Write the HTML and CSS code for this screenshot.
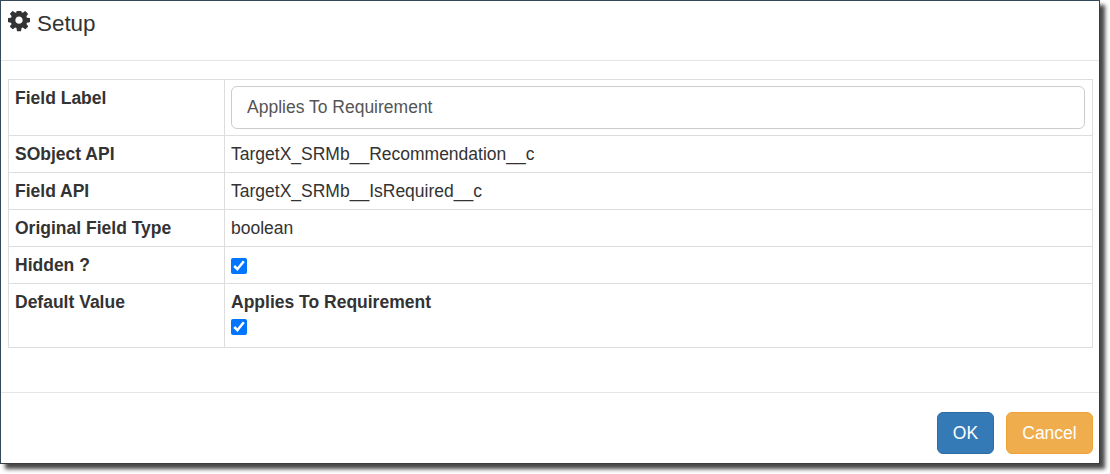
FILE: index.html
```html
<!DOCTYPE html>
<html lang="en">
<head>
<meta charset="utf-8">
<title>Setup</title>
<link rel="stylesheet" href="styles.css">
</head>
<body>
<div class="modal">
  <header class="modal-header">
    <svg class="gear" viewBox="0 0 1536 1536" aria-hidden="true"><path d="M1024 640q0-106-75-181t-181-75-181 75-75 181 75 181 181 75 181-75 75-181zm512-109v222q0 12-8 23t-20 13l-185 28q-19 54-39 91 35 50 107 138 10 12 10 25t-9 23q-27 37-99 108t-94 71q-12 0-26-9l-138-108q-44 23-91 38-16 136-29 186-7 28-36 28h-222q-14 0-24.500-8.500t-11.500-21.500l-28-184q-49-16-90-37l-141 107q-10 9-25 9-14 0-25-11-126-114-165-168-7-10-7-23 0-12 8-23 15-21 51-66.500t54-70.500q-27-50-41-99l-183-27q-13-2-21-12.500t-8-23.500v-222q0-12 8-23t19-13l186-28q14-46 39-92-40-57-107-138-10-12-10-24 0-10 9-23 26-36 98.500-107.500t94.500-71.500q13 0 26 10l138 107q44-23 91-38 16-136 29-186 7-28 36-28h222q14 0 24.500 8.500t11.500 21.500l28 184q49 16 90 37l142-107q9-9 24-9 13 0 25 10 129 119 165 170 7 8 7 22 0 12-8 23-15 21-51 66.500t-54 70.500q26 50 41 98l183 28q13 2 21 12.500t8 23.500z"/></svg>
    <h1 class="modal-title">Setup</h1>
  </header>
  <div class="modal-body">
    <table class="setup-table">
      <tr class="row-input">
        <th>Field Label</th>
        <td><input class="field" type="text" value="Applies To Requirement"></td>
      </tr>
      <tr><th>SObject API</th><td>TargetX_SRMb__Recommendation__c</td></tr>
      <tr><th>Field API</th><td>TargetX_SRMb__IsRequired__c</td></tr>
      <tr><th>Original Field Type</th><td>boolean</td></tr>
      <tr><th>Hidden ?</th><td><input class="check" type="checkbox" checked></td></tr>
      <tr>
        <th>Default Value</th>
        <td>
          <div class="sub-label">Applies To Requirement</div>
          <input class="check" type="checkbox" checked>
        </td>
      </tr>
    </table>
  </div>
  <footer class="modal-footer">
    <button class="btn btn-primary" type="button">OK</button>
    <button class="btn btn-warning" type="button">Cancel</button>
  </footer>
</div>
</body>
</html>
```
FILE: styles.css
```css
* { box-sizing: border-box; }
html, body { margin: 0; padding: 0; background: #fff; }
body {
  width: 1110px;
  height: 474px;
  overflow: hidden;
  font-family: "Liberation Sans", Arial, sans-serif;
  font-size: 17.5px;
  line-height: 20px;
  color: #333;
}
.modal {
  width: 1100px;
  height: 464px;
  background: #fff;
  border: 1px solid #34495a;
  border-bottom-color: #3c3c3c;
  border-right-color: #3c3c3c;
  box-shadow: 5px 5px 4px 0 rgba(40, 40, 40, .85);
  display: flex;
  flex-direction: column;
}
.modal-header {
  height: 60px;
  border-bottom: 1px solid #e5e5e5;
  display: flex;
  align-items: flex-start;
  padding: 8px 7px 0;
  gap: 7px;
}
.gear { width: 22px; height: 22px; fill: #333; flex: none; margin-top: 2px; }
.modal-title {
  margin: 0;
  font-size: 22.4px;
  font-weight: 400;
  line-height: 30px;
  color: #333;
}
.modal-body { height: 331px; padding: 18px 6px 0 7px; }
.setup-table {
  width: 1085px;
  border-collapse: collapse;
  table-layout: fixed;
}
.setup-table th, .setup-table td {
  border: 1px solid #ddd;
  padding: 8px 6px;
  height: 37px;
  vertical-align: top;
  text-align: left;
}
.setup-table th { width: 216px; font-weight: 700; }
.row-input th { height: 56px; }
.setup-table .row-input td { padding: 6px; }
.field {
  display: block;
  width: 854px;
  height: 43px;
  border: 1px solid #ccc;
  border-radius: 6px;
  padding: 0 15px;
  font: 17.5px "Liberation Sans", Arial, sans-serif;
  color: #555;
  background: #fff;
  outline: none;
}
.check { display: block; width: 16px; height: 16px; margin: 3px 0 0; }
.sub-label { font-weight: 700; height: 20px; }
.sub-label + .check { margin-top: 7px; margin-bottom: 4px; }
.modal-footer {
  flex: 1;
  border-top: 1px solid #e5e5e5;
  display: flex;
  justify-content: flex-end;
  align-items: flex-start;
  gap: 12px;
  padding: 19px 6px 0 0;
}
.btn {
  height: 42px;
  border: 1px solid transparent;
  border-radius: 6px;
  padding: 0;
  font: 17.5px "Liberation Sans", Arial, sans-serif;
  color: #fff;
}
.btn-primary { width: 57px; background: #337ab7; border-color: #2e6da4; }
.btn-warning { width: 87px; background: #f0ad4e; border-color: #eea236; }
```
